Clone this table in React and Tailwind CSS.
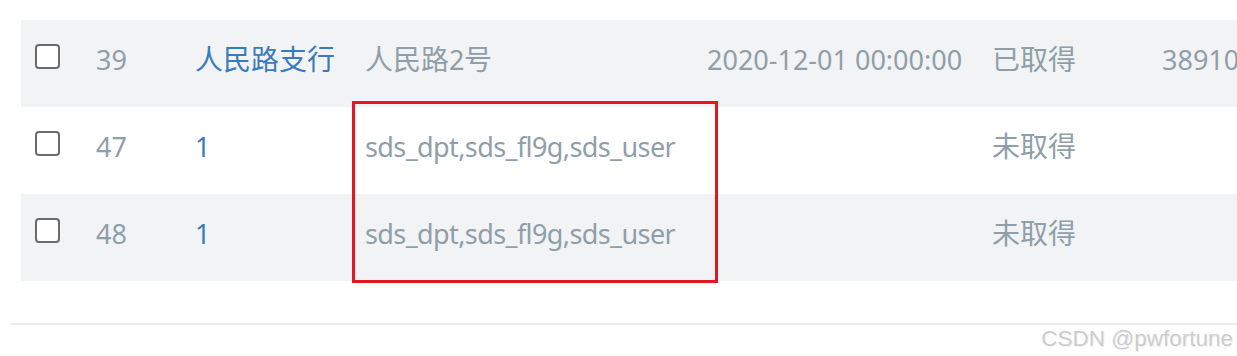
const rows = [
  { id: '39', name: '人民路支行', addr: '人民路2号', date: '2020-12-01 00:00:00', status: '已取得', num: '38910', bg: 'bg-[#f2f3f5]' },
  { id: '47', name: '1', addr: 'sds_dpt,sds_fl9g,sds_user', date: '', status: '未取得', num: '', bg: 'bg-white' },
  { id: '48', name: '1', addr: 'sds_dpt,sds_fl9g,sds_user', date: '', status: '未取得', num: '', bg: 'bg-[#f2f3f5]' },
]

// CJK glyphs in the shot run a touch wider than the latin ones, so wrap them
const Txt = ({ children }) =>
  children.split(/([\u4e00-\u9fff]+)/).map((part, i) =>
    /[\u4e00-\u9fff]/.test(part)
      ? <span key={i} className="text-[28px] tracking-normal">{part}</span>
      : <span key={i}>{part}</span>)

export default function App() {
  return (
    <div className="relative w-[1237px] h-[356px] bg-white overflow-hidden text-[27px] text-[#8f9fa9]"
      style={{ fontFamily: '"Noto Sans", "Noto Sans CJK SC", sans-serif' }}>
      <div className="pt-[20px] pl-[21px]">
        {rows.map((r) => (
          <div key={r.id} className={`flex items-center h-[87px] pb-[9px] leading-none whitespace-nowrap ${r.bg}`}>
            <div className="w-[75px] shrink-0 pl-[14px] pb-[5px]">
              <div className="w-[25px] h-[25px] border-2 border-[#6b6b6b] rounded-[4px] bg-white" />
            </div>
            <div className="w-[99px] shrink-0">{r.id}</div>
            <div className="w-[170px] shrink-0 text-[#3a7bbf]"><Txt>{r.name}</Txt></div>
            <div className="w-[342px] shrink-0 tracking-[-0.6px]"><Txt>{r.addr}</Txt></div>
            <div className="w-[285px] shrink-0">{r.date}</div>
            <div className="w-[170px] shrink-0"><Txt>{r.status}</Txt></div>
            <div className="w-[120px] shrink-0">{r.num}</div>
          </div>
        ))}
      </div>

      <div className="mt-[42px] ml-[11px] h-[2px] bg-[#ececec]" />
      <div className="flex justify-end pr-[4px] pt-[3px] text-[22.5px] leading-none text-[#cdcdcd]"
        style={{ fontFamily: '"Liberation Sans", sans-serif', textShadow: '1px 1px 0 #f3f3f3' }}>
        CSDN @pwfortune
      </div>

      {/* annotation box drawn over the table */}
      <div className="absolute left-[352px] top-[101px] w-[366px] h-[182px] border-[3px] border-[#e5161f]" />
    </div>
  )
}
